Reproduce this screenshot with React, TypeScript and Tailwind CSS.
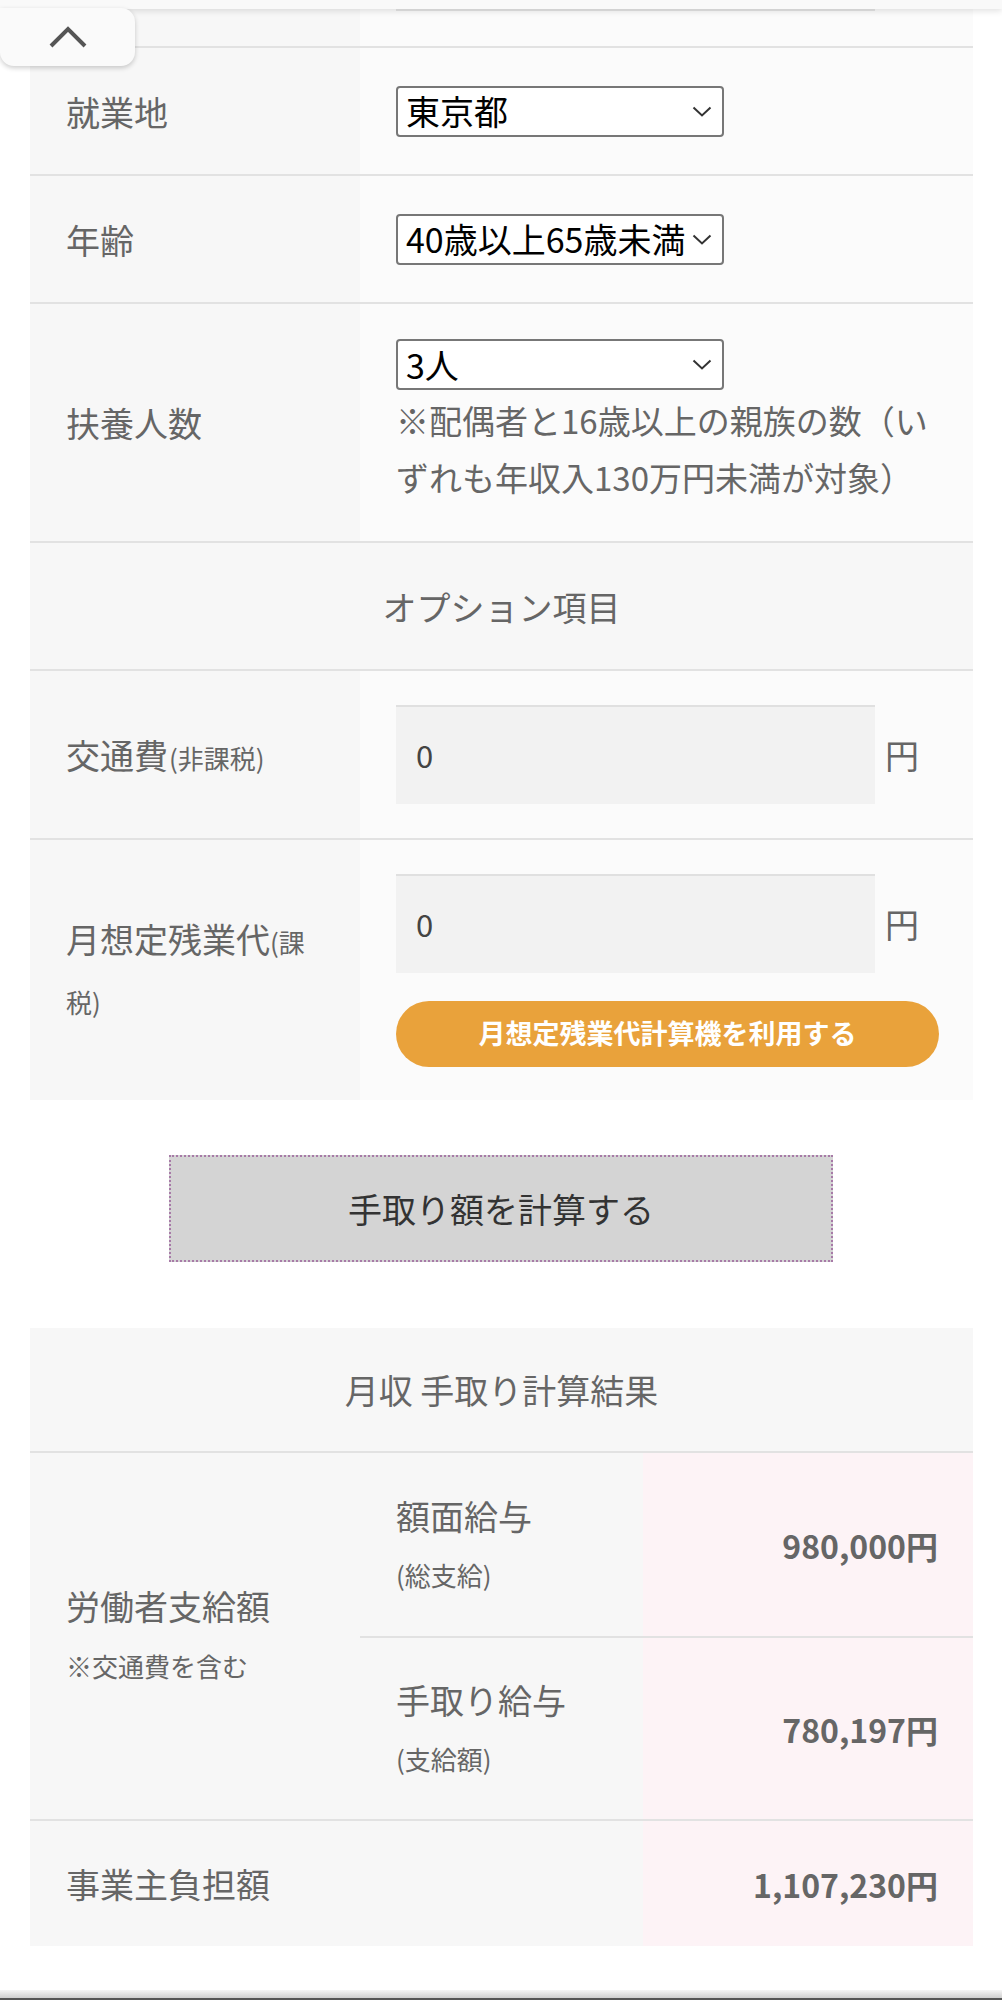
const Select = ({ value }: { value: string }) => (
  <div className="flex h-[51px] w-[328px] items-center justify-between rounded-[4px] border-2 border-[#777] bg-white pl-[8px] pr-[10px] text-[34px] leading-none text-black">
    <span className="whitespace-nowrap">{value}</span>
    <svg width="20" height="11" viewBox="0 0 20 11" className="shrink-0">
      <polyline points="1.5,1.5 10,9.5 18.5,1.5" fill="none" stroke="#333" strokeWidth="2" />
    </svg>
  </div>
);

const YenInput = () => (
  <div className="flex items-center">
    <div className="flex h-[99px] w-[479px] items-center border-t-2 border-[#e0e0e0] bg-[#f2f2f2] pl-[20px] text-[31px] text-[#444]">
      0
    </div>
    <span className="ml-[10px] text-[34px]">円</span>
  </div>
);

const App = () => {
  return (
    <div className="relative min-h-[2000px] bg-white font-['Noto_Sans_CJK_JP','Noto_Sans',sans-serif] text-[#666]">
      <div className="absolute left-0 top-0 z-10 h-[9px] w-full bg-[#f9f9f9] shadow-[0_2px_6px_rgba(0,0,0,0.12)]" />
      <button className="absolute left-0 top-[8px] z-20 flex h-[58px] w-[135px] items-center justify-center rounded-b-[14px] rounded-tr-[14px] bg-[#fafafa] shadow-[0_2px_5px_rgba(0,0,0,0.2)]">
        <svg width="38" height="22" viewBox="0 0 38 22">
          <polyline points="2,20 19,3 36,20" fill="none" stroke="#555" strokeWidth="4" />
        </svg>
      </button>

      {/* form table */}
      <div className="ml-[30px] w-[943px]">
        <div className="flex h-[46px]">
          <div className="w-[330px] bg-[#f7f7f7]" />
          <div className="flex-1 bg-[#fbfbfb] pl-[36px] pt-[8px]">
            <div className="h-[3px] w-[479px] bg-[#e4e4e4]" />
          </div>
        </div>

        <div className="flex h-[128px] border-t-2 border-[#e2e2e2]">
          <div className="flex w-[330px] items-center bg-[#f7f7f7] px-[36px] text-[34px]">就業地</div>
          <div className="flex flex-1 items-center bg-[#fbfbfb] pl-[36px]">
            <Select value="東京都" />
          </div>
        </div>

        <div className="flex h-[128px] border-t-2 border-[#e2e2e2]">
          <div className="flex w-[330px] items-center bg-[#f7f7f7] px-[36px] text-[34px]">年齢</div>
          <div className="flex flex-1 items-center bg-[#fbfbfb] pl-[36px]">
            <Select value="40歳以上65歳未満" />
          </div>
        </div>

        <div className="flex h-[239px] border-t-2 border-[#e2e2e2]">
          <div className="flex w-[330px] items-center bg-[#f7f7f7] px-[36px] text-[34px]">扶養人数</div>
          <div className="flex flex-1 flex-col justify-center bg-[#fbfbfb] pl-[36px] pr-[36px]">
            <Select value="3人" />
            <p className="mt-[2px] text-[33px] leading-[57px]">
              ※配偶者と16歳以上の親族の数（いずれも年収入130万円未満が対象）
            </p>
          </div>
        </div>

        <div className="flex h-[128px] items-center justify-center border-t-2 border-[#e2e2e2] bg-[#f7f7f7] text-[34px]">
          オプション項目
        </div>

        <div className="flex h-[169px] border-t-2 border-[#e2e2e2]">
          <div className="flex w-[330px] items-center bg-[#f7f7f7] px-[36px]">
            <p className="flex items-baseline gap-[1px]">
              <span className="text-[34px] leading-[48px]">交通費</span>
              <span className="text-[26px] leading-[36px]">(非課税)</span>
            </p>
          </div>
          <div className="flex flex-1 items-center bg-[#fbfbfb] pl-[36px]">
            <YenInput />
          </div>
        </div>

        <div className="flex h-[262px] border-t-2 border-[#e2e2e2]">
          <div className="flex w-[330px] items-center bg-[#f7f7f7] px-[36px] text-[34px]">
            <p className="leading-[57px]">
              月想定残業代<span className="text-[26px]">(課税)</span>
            </p>
          </div>
          <div className="flex flex-1 flex-col justify-center bg-[#fbfbfb] pl-[36px]">
            <YenInput />
            <button className="mt-[28px] h-[66px] w-[543px] rounded-full bg-[#e9a23b] text-[27px] font-bold text-white">
              月想定残業代計算機を利用する
            </button>
          </div>
        </div>
      </div>

      <button className="mx-auto mt-[55px] flex h-[107px] w-[664px] items-center justify-center border-2 border-dotted border-[#a77aa7] bg-[#d4d4d4] text-[34px] text-[#333]">
        手取り額を計算する
      </button>

      {/* result table */}
      <div className="ml-[30px] mt-[66px] w-[943px]">
        <div className="flex h-[123px] items-center justify-center bg-[#f7f7f7] text-[34px]">
          月収 手取り計算結果
        </div>

        <div className="flex h-[368px] border-t-2 border-[#e2e2e2]">
          <div className="flex w-[330px] flex-col justify-center bg-[#f7f7f7] px-[36px]">
            <p className="text-[34px] leading-[60px]">労働者支給額</p>
            <p className="text-[26px] leading-[60px]">※交通費を含む</p>
          </div>
          <div className="flex flex-1 flex-col">
            <div className="flex h-[183px]">
              <div className="flex w-[283px] flex-col justify-center bg-[#f7f7f7] pl-[36px]">
                <p className="text-[34px] leading-[59px]">額面給与</p>
                <p className="text-[26px] leading-[59px]">(総支給)</p>
              </div>
              <div className="flex flex-1 items-center justify-end bg-[#fdf3f6] pr-[35px] text-[32px] font-bold">
                980,000円
              </div>
            </div>
            <div className="flex h-[183px] border-t-2 border-[#e2e2e2]">
              <div className="flex w-[283px] flex-col justify-center bg-[#f7f7f7] pl-[36px]">
                <p className="text-[34px] leading-[59px]">手取り給与</p>
                <p className="text-[26px] leading-[59px]">(支給額)</p>
              </div>
              <div className="flex flex-1 items-center justify-end bg-[#fdf3f6] pr-[35px] text-[32px] font-bold">
                780,197円
              </div>
            </div>
          </div>
        </div>

        <div className="flex h-[127px] border-t-2 border-[#e2e2e2]">
          <div className="flex w-[613px] items-center bg-[#f7f7f7] pl-[36px] text-[34px]">事業主負担額</div>
          <div className="flex flex-1 items-center justify-end bg-[#fdf3f6] pr-[35px] text-[32px] font-bold">
            1,107,230円
          </div>
        </div>
      </div>

      <div className="mt-[44px] h-[10px] border-b-2 border-[#555] bg-gradient-to-b from-[#f6f6f6] to-[#cfcfcf]" />
    </div>
  );
};

export default App;
